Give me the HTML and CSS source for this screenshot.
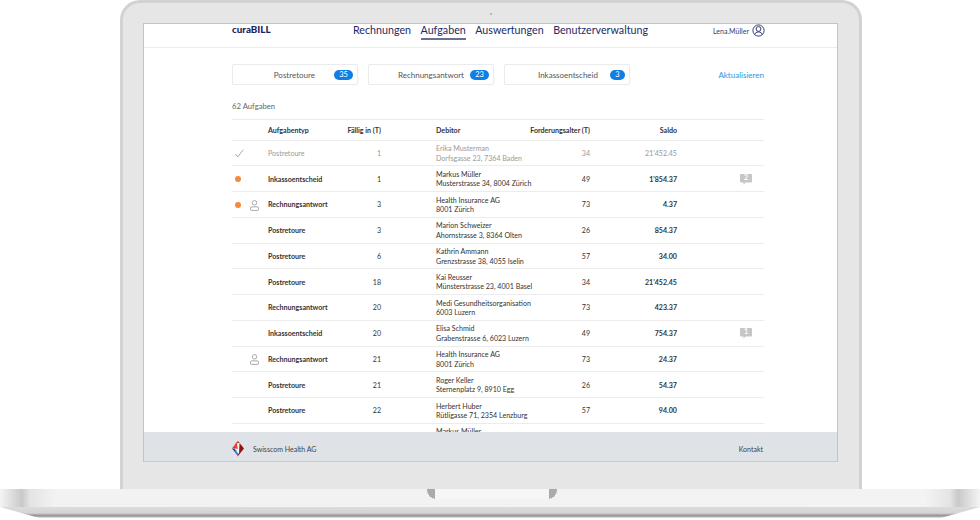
FILE: index.html
```html
<!DOCTYPE html>
<html lang="de">
<head>
<meta charset="utf-8">
<title>curaBILL</title>
<link rel="stylesheet" href="styles.css">
</head>
<body>
<div class="device">
  <div class="lid">
    <span class="camera"></span>
    <div class="screen">
      <header class="topbar">
        <span class="brand">curaBILL</span>
        <nav class="nav">
          <a>Rechnungen</a>
          <a class="active">Aufgaben</a>
          <a>Auswertungen</a>
          <a>Benutzerverwaltung</a>
        </nav>
        <div class="user">
          <span>Lena.Müller</span>
          <svg class="user-icon" viewBox="0 0 13 13"><circle cx="6.5" cy="6.5" r="5.6"/><circle cx="6.5" cy="5" r="2.4"/><path d="M2.6 10.6c.6-1.8 2-2.6 3.9-2.6s3.300.8 3.900 2.600"/></svg>
        </div>
      </header>
      <main class="content">
        <div class="tiles">
          <div class="tile"><span class="tile-label">Postretoure</span><span class="badge">35</span></div>
          <div class="tile"><span class="tile-label">Rechnungsantwort</span><span class="badge">23</span></div>
          <div class="tile"><span class="tile-label">Inkassoentscheid</span><span class="badge small">3</span></div>
          <a class="refresh">Aktualisieren</a>
        </div>
        <p class="count">62 Aufgaben</p>
        <div class="table">
          <div class="row head"><span></span><span>Aufgabentyp</span><span class="num">Fällig in (T)</span><span></span><span>Debitor</span><span class="num">Forderungsalter (T)</span><span class="num">Saldo</span><span></span></div>

          <div class="row done">
            <span class="flags"><svg class="check" viewBox="0 0 10 10"><path d="M.6 5.600 3 8.800 9.200.8"/></svg></span>
            <span class="type">Postretoure</span><span class="num">1</span><span></span>
            <span class="debtor">Erika Musterman<br>Dorfsgasse 23, 7364 Baden</span><span class="num">34</span><span class="num saldo">21'452.45</span><span></span>
          </div>
          <div class="row">
            <span class="flags"><i class="dot"></i></span>
            <span class="type">Inkassoentscheid</span><span class="num">1</span><span></span>
            <span class="debtor">Markus Müller<br>Musterstrasse 34, 8004 Zürich</span><span class="num">49</span><span class="num saldo">1'854.37</span>
            <span class="note"><svg class="bubble" viewBox="0 0 12 11"><path d="M.8 0h10.400a.8.8 0 0 1 .8.8v7a.8.8 0 0 1-.8.8H5.500L3.500 10.800V8.600H.8a.8.8 0 0 1-.8-.8v-7A.8.8 0 0 1 .8 0z"/></svg><b>2</b></span>
          </div>
          <div class="row">
            <span class="flags"><i class="dot"></i><svg class="person" viewBox="0 0 10 12"><circle cx="5" cy="3" r="2.500"/><rect x=".5" y="7.500" width="9" height="4" rx="1.500"/></svg></span>
            <span class="type">Rechnungsantwort</span><span class="num">3</span><span></span>
            <span class="debtor">Health Insurance AG<br>8001 Zürich</span><span class="num">73</span><span class="num saldo">4.37</span><span></span>
          </div>
          <div class="row">
            <span class="flags"></span>
            <span class="type">Postretoure</span><span class="num">3</span><span></span>
            <span class="debtor">Marion Schweizer<br>Ahornstrasse 3, 8364 Olten</span><span class="num">26</span><span class="num saldo">854.37</span><span></span>
          </div>
          <div class="row">
            <span class="flags"></span>
            <span class="type">Postretoure</span><span class="num">6</span><span></span>
            <span class="debtor">Kathrin Ammann<br>Grenzstrasse 38, 4055 Iselin</span><span class="num">57</span><span class="num saldo">34.00</span><span></span>
          </div>
          <div class="row">
            <span class="flags"></span>
            <span class="type">Postretoure</span><span class="num">18</span><span></span>
            <span class="debtor">Kai Reusser<br>Münsterstrasse 23, 4001 Basel</span><span class="num">34</span><span class="num saldo">21'452.45</span><span></span>
          </div>
          <div class="row">
            <span class="flags"></span>
            <span class="type">Rechnungsantwort</span><span class="num">20</span><span></span>
            <span class="debtor">Medi Gesundheitsorganisation<br>6003 Luzern</span><span class="num">73</span><span class="num saldo">423.37</span><span></span>
          </div>
          <div class="row">
            <span class="flags"></span>
            <span class="type">Inkassoentscheid</span><span class="num">20</span><span></span>
            <span class="debtor">Elisa Schmid<br>Grabenstrasse 6, 6023 Luzern</span><span class="num">49</span><span class="num saldo">754.37</span>
            <span class="note"><svg class="bubble" viewBox="0 0 12 11"><path d="M.8 0h10.400a.8.8 0 0 1 .8.8v7a.8.8 0 0 1-.8.8H5.500L3.500 10.800V8.600H.8a.8.8 0 0 1-.8-.8v-7A.8.8 0 0 1 .8 0z"/></svg><b>1</b></span>
          </div>
          <div class="row">
            <span class="flags"><i class="dot ghost"></i><svg class="person" viewBox="0 0 10 12"><circle cx="5" cy="3" r="2.500"/><rect x=".5" y="7.500" width="9" height="4" rx="1.500"/></svg></span>
            <span class="type">Rechnungsantwort</span><span class="num">21</span><span></span>
            <span class="debtor">Health Insurance AG<br>8001 Zürich</span><span class="num">73</span><span class="num saldo">24.37</span><span></span>
          </div>
          <div class="row">
            <span class="flags"></span>
            <span class="type">Postretoure</span><span class="num">21</span><span></span>
            <span class="debtor">Roger Keller<br>Sternenplatz 9, 8910 Egg</span><span class="num">26</span><span class="num saldo">54.37</span><span></span>
          </div>
          <div class="row">
            <span class="flags"></span>
            <span class="type">Postretoure</span><span class="num">22</span><span></span>
            <span class="debtor">Herbert Huber<br>Rütligasse 71, 2354 Lenzburg</span><span class="num">57</span><span class="num saldo">94.00</span><span></span>
          </div>
          <div class="row">
            <span class="flags"></span>
            <span class="type">Postretoure</span><span class="num">24</span><span></span>
            <span class="debtor">Markus Müller<br>Musterstrasse 34, 8004 Zürich</span><span class="num">34</span><span class="num saldo">154.37</span><span></span>
          </div>
        </div>
      </main>
      <footer class="footer">
        <svg class="logo" viewBox="0 0 12 16">
          <path d="M6 0 12 7.500 6 15z" fill="#8f1414"/>
          <path d="M6 0 0 7.500 3.500 7.500z" fill="#d8301c"/>
          <path d="M6 0 3 3 2.500 7 6 8z" fill="#e8461e"/>
          <path d="M0 7.500 6 15 3 8z" fill="#1c4fa8"/>
          <path d="M3 10 6 16 6 9z" fill="#2d86e0"/>
          <path d="M5 2.500 7.500 1.500 7 13 4.500 10.500 5.800 7.500z" fill="#fff"/>
        </svg>
        <span class="company">Swisscom Health AG</span>
        <a class="contact">Kontakt</a>
      </footer>
    </div>
  </div>
  <div class="base">
    <div class="deck"><span class="notch"></span></div>
    <div class="lip"></div>
  </div>
</div>
</body>
</html>
```

FILE: styles.css
```css
* { box-sizing: border-box; }
html, body { margin: 0; height: 520px; overflow: hidden; background: #fff; }
body { font-family: Lato, "Open Sans", sans-serif; color: #333; }

.device { width: 980px; height: 520px; display: flex; flex-direction: column; }

.lid {
  position: relative;
  width: 742px; height: 489px;
  margin-left: 120px;
  padding: 20px 21px 0 20px;
  background: #e6e6e6;
  border: 3px solid #d2d2d2;
  border-bottom: 0;
  border-radius: 20px 20px 0 0;
}
.camera {
  position: absolute; top: 10px; left: 367px;
  width: 2px; height: 2px; border-radius: 50%; background: #aaa;
}
.screen {
  height: 439px;
  display: flex; flex-direction: column;
  background: #fff;
  border: 1px solid #c4c4c4;
  border-width: 1px 1px 0;
  overflow: hidden;
}

.topbar {
  flex: none; height: 24px;
  display: flex; align-items: flex-start;
  padding: 0 72px 0 88px;
  border-bottom: 1px solid #ececec;
}
.brand { width: 121px; font-size: 9.800px; font-weight: 900; line-height: 11px; color: #18235f; }
.nav { display: flex; gap: 9.500px; }
.nav a {
  display: block; height: 16px;
  font-size: 10.700px; line-height: 12px; color: #1d2a66;
}
.nav a.active { border-bottom: 2px solid #6b6f96; }
.user { margin-left: auto; display: flex; align-items: flex-start; gap: 3px; font-size: 7px; color: #33406f; }
.user span { padding-top: 3px; }
.user-icon { width: 13px; height: 13px; fill: none; stroke: #1d2a66; stroke-width: .9; }

.content { flex: 1; min-height: 0; overflow: hidden; padding: 16px 73px 0 88px; }
.tiles { display: flex; align-items: center; gap: 10px; }
.tile {
  width: 126px; height: 21px;
  display: flex; align-items: center; justify-content: flex-end;
  padding-right: 4px;
  border: 1px solid #ebebeb; border-radius: 2px;
  font-size: 8px; color: #555;
}
.tile-label { margin-right: 6px; }
.tile:first-child .tile-label { margin-right: 19px; }
.tile:nth-child(3) .tile-label { margin-right: 12px; }
.badge {
  width: 19px; height: 10px; border-radius: 5px;
  background: #0f7fe6; color: #fff;
  font-size: 7.500px; line-height: 10px; text-align: center;
}
.badge.small { width: 15px; }
.refresh { margin-left: auto; font-size: 8px; color: #2896de; }
.count { margin: 15px 0 7px; font-size: 7.700px; line-height: 12px; color: #666; }

.table { border-top: 1px solid #ebebeb; }
.row {
  display: grid;
  grid-template-columns: 36px 79px 34px 55px 95px 59px 87px 87px;
  align-items: center;
  height: 25.750px;
  padding-top: 1.500px;
  border-bottom: 1px solid #ececec;
  font-size: 7.100px; line-height: 9.500px; color: #333;
}
.row.head { height: 20.500px; font-weight: 700; color: #333; border-bottom-color: #ebebeb; white-space: nowrap; }
.num { text-align: right; white-space: nowrap; }
.row.head .num { direction: rtl; }
.type, .saldo { font-weight: 700; }
.debtor { white-space: nowrap; }
.row.done { color: #999; }
.row.done .type, .row.done .saldo { font-weight: 400; }

.flags { display: flex; align-items: center; gap: 9px; }
.dot { width: 6px; height: 6px; border-radius: 50%; background: #f58a3c; margin-left: 3px; }
.dot.ghost { background: none; }
.check { width: 9px; height: 9px; margin-left: 3px; fill: none; stroke: #777; stroke-width: .7; }
.person { width: 9px; height: 11px; fill: none; stroke: #8a8a8a; stroke-width: .8; }

.note { position: relative; width: 12px; height: 11px; margin-left: 63px; }
.bubble { display: block; width: 12px; height: 11px; fill: #c6c6c6; }
.note b { position: absolute; top: -1px; left: 0; width: 12px; text-align: center; font-size: 7px; font-weight: 700; color: #fff; }

.footer {
  flex: none; height: 30px;
  display: flex; align-items: center;
  padding: 4px 74px 0 88px;
  background: #dfe3e7;
  border-bottom: 1px solid #c8ccd0;
  font-size: 7px; color: #444;
}
.logo { width: 12px; height: 16px; margin-right: 9px; }
.contact { margin-left: auto; }

.base { height: 31px; width: 980px; }
.deck {
  position: relative; height: 18px;
  background: linear-gradient(90deg, #f4f4f4 0, #c9c9c9 22px, #e4e4e4 30px, #f2f2f2 55px, #f3f3f3 925px, #e4e4e4 950px, #c9c9c9 958px, #f4f4f4 980px);
}
.notch {
  position: absolute; left: 427px; top: 0;
  width: 130px; height: 10px;
  background: linear-gradient(90deg, #aaa 0, #aaa 8px, #f6f6f6 8px, #f6f6f6 122px, #aaa 122px);
  border-radius: 0 0 9px 9px;
}
.lip {
  height: 11px;
  background: linear-gradient(180deg, #dcdcdc 0, #d4d4d4 55%, #8f8f8f 80%, #e8e8e8 100%);
  clip-path: polygon(0 0, 100% 0, 96% 100%, 4% 100%);
}
```
